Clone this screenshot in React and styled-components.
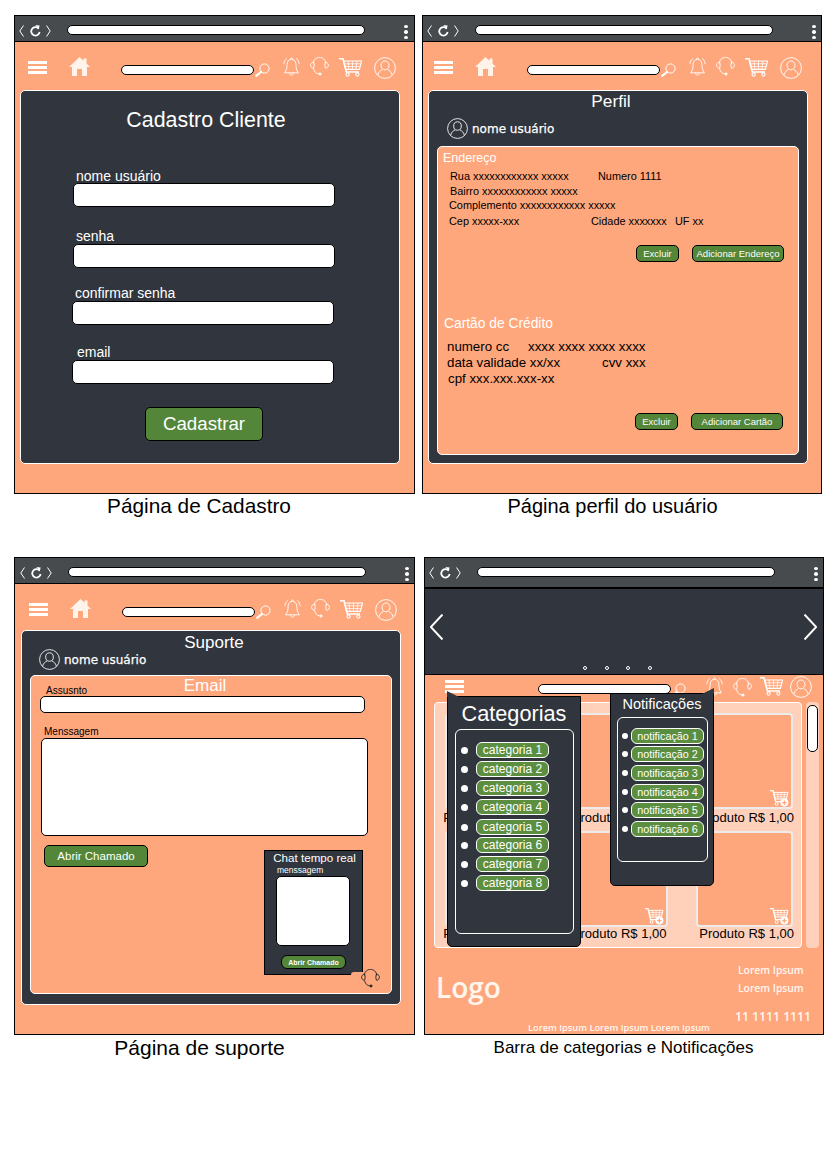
import React from 'react';
import styled, { createGlobalStyle } from 'styled-components';

const ORANGE = '#ffa77c';
const DARK = '#31353d';
const GREEN = '#538639';
const PILL = '#5c8e3f';
const SANS = '"Liberation Sans", Arial, sans-serif';

const Global = createGlobalStyle`
	* { box-sizing: border-box; }
	body {
		margin: 0;
		background: #fff;
		font-family: ${SANS};
		color: #000;
	}
`;

const Page = styled.div`
	padding: 15px 0 0 14px;
	height: 1169px;
	overflow: hidden;
`;
const Row = styled.div`
	display: flex;
	gap: ${(p) => p.$gap}px;
	margin-bottom: ${(p) => p.$bottom || 0}px;
`;
const Cell = styled.div`
	width: 401px;
`;
const Caption = styled.div`
	text-align: center;
	white-space: nowrap;
	font-size: ${(p) => p.$size}px;
	line-height: 24px;
	margin: ${(p) => p.$top}px 0 0 ${(p) => p.$shift || 0}px;
`;
const Frame = styled.div`
	position: relative;
	width: ${(p) => p.$width || 401}px;
	height: ${(p) => p.$height}px;
	border: 1px solid #000;
	background: ${ORANGE};
`;

const Bar = styled.div`
	display: flex;
	height: ${(p) => p.$height}px;
	padding: 9px 0 0 ${(p) => 4 + (p.$shift || 0)}px;
	background: #474b4e;
	border-bottom: ${(p) => p.$line}px solid #000;
`;
const Url = styled.div`
	width: 298px;
	height: 10px;
	margin-left: 16px;
	background: #fff;
	border: 1px solid #000;
	border-radius: 5px;
`;
const Dots = styled.div`
	display: flex;
	flex-direction: column;
	gap: 2px;
	margin-left: 39px;
	height: 14px;
	& > i {
		width: 4px;
		height: 4px;
		border-radius: 50%;
		background: #fff;
	}
`;

const Chevron = ({ dir = 'left', w = 5, h = 12, sw = 1, ml = 0 }) => (
	<svg width={w} height={h} viewBox={`0 0 ${w} ${h}`} style={{ marginLeft: ml, flexShrink: 0 }}>
		<path
			d={dir === 'left' ? `M${w - 0.5} 0.5L0.8 ${h / 2}L${w - 0.5} ${h - 0.5}` : `M0.5 0.5L${w - 0.8} ${h / 2}L0.5 ${h - 0.5}`}
			fill="none"
			stroke="#fff"
			strokeWidth={sw}
		/>
	</svg>
);

const Refresh = () => (
	<svg width="11" height="12" viewBox="0 0 11 12" style={{ marginLeft: 6 }}>
		<path d="M8.6 3.6A4.2 4.2 0 1 0 9.6 7" fill="none" stroke="#fff" strokeWidth="1.8" />
		<path d="M5.4 0L9.6 0.6L8.8 4.6Z" fill="#fff" />
	</svg>
);

const Browser = ({ height = 25, line = 1, shift = 0 }) => (
	<Bar $height={height + line} $line={line} $shift={shift}>
		<Chevron />
		<Refresh />
		<Chevron dir="right" ml={5} />
		<Url />
		<Dots>
			<i />
			<i />
			<i />
		</Dots>
	</Bar>
);

const Nav = styled.div`
	display: flex;
	align-items: flex-start;
	height: ${(p) => p.$height}px;
`;
const Slot = styled.div`
	display: flex;
	flex-shrink: 0;
	margin: ${(p) => p.$top}px 0 0 ${(p) => p.$left}px;
`;
const SearchBox = styled.div`
	width: 133px;
	height: 10px;
	background: #fff;
	border: 1px solid #000;
	border-radius: 5px;
`;

const Burger = () => (
	<svg width="19" height="13" viewBox="0 0 19 13">
		<path d="M0 0h19v3H0zM0 5h19v3H0zM0 10h19v3H0z" fill="#fff" />
	</svg>
);
const Home = () => (
	<svg width="21" height="19" viewBox="0 0 21 19">
		<path d="M10.5 0L14.5 3.8V1.5H17.5V6.6L21 10H18V19H13V12H8V19H3V10H0Z" fill="#fff3ea" />
	</svg>
);
const Magnifier = () => (
	<svg width="15" height="14" viewBox="0 0 15 14">
		<circle cx="9.5" cy="5.5" r="4.6" fill="none" stroke="#fff" strokeWidth="1" />
		<path d="M6 9L1.2 12.8" stroke="#fff" strokeWidth="2.2" strokeLinecap="round" />
	</svg>
);
const Bell = () => (
	<svg width="17" height="19" viewBox="0 0 17 19" fill="none" stroke="#fff" strokeWidth="0.9">
		<path d="M1.6 15.8C3.8 13 4 10.6 4.1 7.4C4.2 4 6 2.4 8.5 2.4S12.8 4 12.9 7.4C13 10.6 13.2 13 15.4 15.8Z" />
		<path d="M6.6 16C6.6 18.8 10.4 18.8 10.4 16M7.5 2.4C7.5 0.2 9.5 0.2 9.5 2.4" />
		<path d="M3.8 1.4C2 2.8 1 4.8 0.8 7.2M13.2 1.4C15 2.8 16 4.8 16.2 7.2" />
	</svg>
);
const Headset = ({ color = '#fff' }) => (
	<svg width="19" height="20" viewBox="0 0 19 20" fill="none" stroke={color} strokeWidth="0.9">
		<path d="M3.4 7.5C3.4 -0.6 15.6 -0.6 15.6 7.5" />
		<path d="M3.4 6C1.4 6.6 0.6 8 0.6 9.2S1.4 12 3.4 12.4C4.4 11 4.4 7.4 3.4 6Z" />
		<path d="M15.6 6C17.6 6.6 18.4 8 18.4 9.2S17.6 12 15.6 12.4C14.6 11 14.6 7.4 15.6 6Z" />
		<path d="M3.6 12.6C4.4 16 6 17.6 8.6 17.8" />
		<circle cx="10" cy="18" r="1.1" fill={color} />
	</svg>
);
const Cart = () => (
	<svg width="23" height="19" viewBox="0 0 23 19" fill="none" stroke="#fff" strokeWidth="1.1">
		<path d="M0 0.8H4L7.4 14H20" strokeWidth="1.6" />
		<path d="M4.6 3H22.6L20.4 11.4H6.6Z" />
		<path d="M5.2 5.8H21.8M6 8.6H21.2M9 3L9.8 11.4M13.5 3V11.4M18 3L17 11.4" strokeWidth="0.8" />
		<circle cx="8.6" cy="16.6" r="1.6" />
		<circle cx="18.4" cy="16.6" r="1.6" />
	</svg>
);
const User = ({ size = 22 }) => (
	<svg width={size} height={size} viewBox="0 0 22 22" fill="none" stroke="#fff" strokeWidth="0.9">
		<circle cx="11" cy="11" r="10.4" />
		<ellipse cx="11" cy="8.4" rx="4" ry="4.4" />
		<path d="M3.8 18.2C4.6 14.6 6.6 13.4 8.4 12.6M18.2 18.2C17.4 14.6 15.4 13.4 13.6 12.6" />
	</svg>
);
const CartPlus = () => (
	<svg width="19" height="17" viewBox="0 0 19 17" fill="none" stroke="#fff" strokeWidth="1">
		<path d="M0 0.6H3L5.6 11.6H12" strokeWidth="1.3" />
		<path d="M3.6 2.4H18L16.4 9H5.2Z" />
		<path d="M4.2 4.6H17.4M4.8 6.8H16.8M7.6 2.4L8.2 9M11 2.4V9M14.6 2.4L13.8 9" strokeWidth="0.7" />
		<circle cx="6.6" cy="14" r="1.4" />
		<circle cx="14.4" cy="12.6" r="4" fill="#fff" stroke="none" />
		<path d="M14.4 10.4V14.8M12.2 12.6H16.6" stroke={ORANGE} strokeWidth="1.2" />
	</svg>
);

const Toolbar = ({ shift = 0, height = 48 }) => (
	<Nav $height={height}>
		<Slot $top={19} $left={13 + shift}><Burger /></Slot>
		<Slot $top={15} $left={22}><Home /></Slot>
		<Slot $top={23} $left={31}><SearchBox /></Slot>
		<Slot $top={21} $left={1}><Magnifier /></Slot>
		<Slot $top={15} $left={13}><Bell /></Slot>
		<Slot $top={14} $left={10}><Headset /></Slot>
		<Slot $top={16} $left={10}><Cart /></Slot>
		<Slot $top={15} $left={12}><User /></Slot>
	</Nav>
);

const Panel = styled.div`
	width: 380px;
	height: ${(p) => p.$height}px;
	margin-left: ${(p) => p.$left}px;
	background: ${DARK};
	border: 1px solid #fff;
	border-radius: 5px;
	overflow: hidden;
`;
const Title = styled.div`
	color: #fff;
	text-align: center;
	font-size: ${(p) => p.$size}px;
	line-height: ${(p) => p.$lh}px;
	margin-top: ${(p) => p.$top}px;
	padding: 0 ${(p) => (p.$shift < 0 ? -2 * p.$shift : 0)}px 0 ${(p) => (p.$shift > 0 ? 2 * p.$shift : 0)}px;
`;
const Field = styled.div`
	margin: ${(p) => p.$top}px 0 0 ${(p) => p.$left}px;
`;
const FieldLabel = styled.div`
	color: #fff;
	font-size: 14px;
	line-height: 14px;
	margin: 0 0 ${(p) => p.$gap}px ${(p) => p.$shift}px;
`;
const Input = styled.div`
	width: 262px;
	height: 24px;
	background: #fff;
	border: 1px solid #000;
	border-radius: 5px;
`;
const SubmitButton = styled.button`
	display: block;
	width: 118px;
	height: 34px;
	margin: 23px 0 0 124px;
	padding: 0;
	background: ${GREEN};
	color: #fff;
	border: 1px solid #000;
	border-radius: 5px;
	font: 18.7px ${SANS};
`;

const UserRow = styled.div`
	display: flex;
	align-items: center;
	gap: 4px;
	height: 21px;
	margin: ${(p) => p.$top}px 0 0 ${(p) => p.$left}px;
	color: #fff;
	font: 12px "DejaVu Sans", sans-serif;
	-webkit-text-stroke: 0.25px #fff;
`;
const Inner = styled.div`
	width: 362px;
	height: ${(p) => p.$height}px;
	margin: ${(p) => p.$top}px 0 0 8px;
	background: ${ORANGE};
	border: 1px solid #fff;
	border-radius: 5px;
`;
const SectionTitle = styled.div`
	color: #fff;
	font-size: ${(p) => p.$size}px;
	line-height: 16px;
	margin: ${(p) => p.$top}px 0 0 ${(p) => p.$left}px;
`;
const Line = styled.div`
	display: flex;
	white-space: pre;
	font-size: ${(p) => p.$size}px;
	line-height: 14px;
	margin: ${(p) => p.$top}px 0 0 ${(p) => p.$left}px;
`;
const Col = styled.span`
	width: ${(p) => p.$w}px;
	flex-shrink: 0;
`;
const Actions = styled.div`
	display: flex;
	gap: 13px;
	margin: ${(p) => p.$top}px 0 0 ${(p) => p.$left}px;
`;
const SmallButton = styled.button`
	width: ${(p) => p.$w}px;
	height: 17px;
	padding: 0;
	background: ${GREEN};
	color: #fff;
	border: 1px solid #000;
	border-radius: 5px;
	font: 9.5px ${SANS};
	white-space: nowrap;
`;

const EmailHead = styled.div`
	display: grid;
	height: 20px;
	& > * {
		grid-area: 1 / 1;
	}
`;
const EmailTitle = styled.div`
	justify-self: center;
	align-self: start;
	margin: 2px 12px 0 0;
	color: #fff;
	font-size: 17px;
	line-height: 16px;
`;
const TinyLabel = styled.div`
	font-size: 10px;
	line-height: 10px;
	margin: ${(p) => p.$top || 0}px 0 0 ${(p) => p.$left}px;
	align-self: end;
`;
const Box = styled.div`
	width: ${(p) => p.$w}px;
	height: ${(p) => p.$h}px;
	margin: ${(p) => p.$top || 0}px 0 0 ${(p) => p.$left}px;
	background: #fff;
	border: 1px solid #000;
	border-radius: ${(p) => p.$r}px;
`;
const SupportRow = styled.div`
	display: flex;
	align-items: flex-start;
	margin-top: 9px;
`;
const OpenTicket = styled.button`
	width: 104px;
	height: 22px;
	margin-left: 13px;
	padding: 0;
	background: ${GREEN};
	color: #fff;
	border: 1px solid #000;
	border-radius: 5px;
	font: 11.5px ${SANS};
`;
const Chat = styled.div`
	position: relative;
	width: 99px;
	height: 125px;
	margin: 5px 0 0 116px;
	background: ${DARK};
	border: 1px solid #000;
	&::after {
		content: '';
		position: absolute;
		right: -1px;
		bottom: -1px;
		width: 12px;
		height: 3px;
		background: ${ORANGE};
		border-radius: 6px 0 0 0;
	}
`;
const ChatTitle = styled.div`
	color: #fff;
	text-align: center;
	font-size: 11.6px;
	line-height: 12px;
	margin: 1px 0 0 2px;
`;
const ChatLabel = styled.div`
	color: #fff;
	font-size: 8.5px;
	line-height: 10px;
	margin: 1px 0 0 12px;
`;
const ChatButton = styled.button`
	display: block;
	width: 65px;
	height: 14px;
	margin: 9px 0 0 16px;
	padding: 0;
	background: ${GREEN};
	color: #fff;
	border: 1px solid #000;
	border-radius: 6px;
	font: bold 7px ${SANS};
`;
const ChatHeadset = styled.div`
	position: absolute;
	left: 96px;
	top: 117px;
	display: flex;
	z-index: 1;
`;

const Hero = styled.div`
	position: relative;
	display: flex;
	align-items: flex-start;
	justify-content: space-between;
	height: 86px;
	padding: 25px 6px 0 5px;
	background: ${DARK};
	border-bottom: 1px solid #000;
`;
const HeroDots = styled.div`
	position: absolute;
	left: 158px;
	top: 77px;
	display: flex;
	gap: 17.6px;
	& > i {
		width: 4px;
		height: 4px;
		border-radius: 50%;
		border: 1px solid #fff;
	}
`;
const Shelf = styled.div`
	display: flex;
	gap: 4px;
	margin-left: 9px;
`;
const Products = styled.div`
	display: grid;
	grid-template-columns: repeat(3, 97px);
	column-gap: 28.5px;
	row-gap: 5px;
	align-content: start;
	width: 368px;
	height: 246px;
	padding: 10px 0 0 10px;
	background: #ffd1bb;
	border: 1px solid #fff;
	border-radius: 4px;
`;
const ProductCard = styled.div`
	display: flex;
	align-items: flex-end;
	justify-content: flex-end;
	height: 96px;
	padding: 0 2px 0 0;
	background: ${ORANGE};
	border: 2px solid #ececec;
	border-radius: 4px;
`;
const Price = styled.div`
	margin: ${(p) => p.$top}px ${(p) => p.$inset}px 0 -10px;
	text-align: right;
	font-size: 13px;
	line-height: 16px;
	white-space: nowrap;
`;
const Scroll = styled.div`
	width: 13px;
	height: 246px;
	padding: 3px 1px;
	background: #ffd1bb;
	border-radius: 4px;
`;
const Thumb = styled.div`
	width: 11px;
	height: 47px;
	background: #fff;
	border: 1px solid #000;
	border-radius: 5px;
`;
const Footer = styled.div`
	display: grid;
	grid-template-columns: 103px 210px 1fr;
	height: 86px;
	font-family: "Open Sans", sans-serif;
	font-weight: 600;
	color: #fff6f0;
`;
const Logo = styled.div`
	font-size: 28px;
	line-height: 32px;
	margin: 23px 0 0 11px;
`;
const FooterLine = styled.div`
	align-self: end;
	font-size: 9.25px;
	line-height: 12px;
	white-space: nowrap;
`;
const FooterSide = styled.div`
	display: flex;
	flex-direction: column;
	font-size: 10.3px;
	line-height: 12px;
	padding-top: 16px;
	white-space: nowrap;
`;
const FooterLorem = styled.span`
	margin-top: ${(p) => p.$top}px;
`;
const Phone = styled.div`
	font-size: 12.2px;
	margin: 17px 0 0 -3px;
`;
const Popover = styled.div`
	position: absolute;
	left: ${(p) => p.$left}px;
	top: ${(p) => p.$top}px;
	width: ${(p) => p.$w}px;
	height: ${(p) => p.$h}px;
	background: ${DARK};
	border: 1px solid #000;
	border-radius: 0 0 5px 5px;
	&::before {
		content: '';
		position: absolute;
		top: -6px;
		${(p) => (p.$tail === 'right' ? 'right: -1px;' : 'left: -1px;')}
		width: 12px;
		height: 6px;
		background: ${DARK};
		clip-path: ${(p) => (p.$tail === 'right' ? 'polygon(100% 0, 100% 100%, 0 100%)' : 'polygon(0 0, 100% 100%, 0 100%)')};
	}
`;
const PopTitle = styled.div`
	color: #fff;
	text-align: center;
	font-size: ${(p) => p.$size}px;
	line-height: 24px;
	margin-top: ${(p) => p.$top}px;
`;
const PopList = styled.div`
	width: ${(p) => p.$w}px;
	height: ${(p) => p.$h}px;
	margin: ${(p) => p.$top}px 0 0 ${(p) => p.$left}px;
	padding: ${(p) => p.$pad}px 0 0 ${(p) => p.$bullet}px;
	border: 1px solid #fff;
	border-radius: 6px;
`;
const PopItem = styled.div`
	display: flex;
	align-items: center;
	gap: ${(p) => p.$gap}px;
	margin-bottom: ${(p) => p.$after}px;
`;
const Bullet = styled.i`
	width: ${(p) => p.$size}px;
	height: ${(p) => p.$size}px;
	border-radius: 50%;
	background: #fff;
	flex-shrink: 0;
`;
const Pill = styled.div`
	width: 73px;
	height: 16px;
	background: ${PILL};
	color: #fff;
	border: 1px solid #fff;
	border-radius: 6px;
	text-align: center;
	font-size: ${(p) => p.$size}px;
	line-height: 14px;
	white-space: nowrap;
`;

const categoryGaps = [3, 3, 3, 4, 2, 3, 3, 0];
const noticeGaps = [2, 3, 3, 2, 3, 0];
const priceInsets = [4, 1, -1];

function CadastroPage() {
	return (
		<Cell>
			<Frame $height={479}>
				<Browser />
				<Toolbar />
				<Panel $left={5} $height={374}>
					<Title $size={21.4} $lh={24} $top={17} $shift={-4}>Cadastro Cliente</Title>
					<Field $top={37} $left={52}>
						<FieldLabel $gap={0} $shift={3}>nome usuário</FieldLabel>
						<Input />
					</Field>
					<Field $top={22} $left={52}>
						<FieldLabel $gap={1} $shift={3}>senha</FieldLabel>
						<Input />
					</Field>
					<Field $top={18} $left={51}>
						<FieldLabel $gap={1} $shift={3}>confirmar senha</FieldLabel>
						<Input />
					</Field>
					<Field $top={20} $left={51}>
						<FieldLabel $gap={1} $shift={5}>email</FieldLabel>
						<Input />
					</Field>
					<SubmitButton>Cadastrar</SubmitButton>
				</Panel>
			</Frame>
			<Caption $size={20.8} $top={0} $shift={-31}>Página de Cadastro</Caption>
		</Cell>
	);
}

function PerfilPage() {
	return (
		<Cell>
			<Frame $height={479} $width={400}>
				<Browser />
				<Toolbar shift={-2} />
				<Panel $left={5} $height={374}>
					<Title $size={17.3} $lh={20} $top={0} $shift={-7}>Perfil</Title>
					<UserRow $top={7} $left={18}>
						<User size={21} />
						nome usuário
					</UserRow>
					<Inner $top={7} $height={309}>
						<SectionTitle $size={12.5} $top={3} $left={5}>Endereço</SectionTitle>
						<Line $size={10.9} $top={3} $left={12}>
							<Col $w={148}>Rua xxxxxxxxxxxx xxxxx</Col>
							<span>Numero 1111</span>
						</Line>
						<Line $size={10.9} $top={1} $left={12}>Bairro xxxxxxxxxxxx xxxxx</Line>
						<Line $size={10.9} $top={0} $left={11}>Complemento xxxxxxxxxxxx xxxxx</Line>
						<Line $size={10.9} $top={2} $left={11}>
							<Col $w={142}>Cep xxxxx-xxx</Col>
							<Col $w={84}>Cidade xxxxxxx</Col>
							<span>UF xx</span>
						</Line>
						<Actions $top={17} $left={198}>
							<SmallButton $w={43}>Excluir</SmallButton>
							<SmallButton $w={92}>Adicionar Endereço</SmallButton>
						</Actions>
						<SectionTitle $size={13.8} $top={54} $left={6}>Cartão de Crédito</SectionTitle>
						<Line $size={13.3} $top={8} $left={9}>
							<Col $w={81}>numero cc</Col>
							<span>xxxx xxxx xxxx xxxx</span>
						</Line>
						<Line $size={13.3} $top={2} $left={9}>
							<Col $w={155}>data validade xx/xx</Col>
							<span>cvv xxx</span>
						</Line>
						<Line $size={13.3} $top={2} $left={10}>cpf xxx.xxx.xxx-xx</Line>
						<Actions $top={27} $left={197}>
							<SmallButton $w={43}>Excluir</SmallButton>
							<SmallButton $w={92}>Adicionar Cartão</SmallButton>
						</Actions>
					</Inner>
				</Panel>
			</Frame>
			<Caption $size={20} $top={0} $shift={-20}>Página perfil do usuário</Caption>
		</Cell>
	);
}

function SuportePage() {
	return (
		<Cell>
			<Frame $height={478}>
				<Browser shift={1} />
				<Toolbar shift={1} height={46} />
				<Panel $left={6} $height={375}>
					<Title $size={17} $lh={14} $top={5} $shift={3}>Suporte</Title>
					<UserRow $top={-1} $left={17}>
						<User size={21} />
						nome usuário
					</UserRow>
					<Inner $top={5} $height={319}>
						<EmailHead>
							<EmailTitle>Email</EmailTitle>
							<TinyLabel $left={15}>Assusnto</TinyLabel>
						</EmailHead>
						<Box $w={325} $h={17} $left={9} $r={5} />
						<TinyLabel $top={14} $left={13}>Menssagem</TinyLabel>
						<Box $w={327} $h={98} $top={1} $left={10} $r={5} />
						<SupportRow>
							<OpenTicket>Abrir Chamado</OpenTicket>
							<Chat>
								<ChatTitle>Chat tempo real</ChatTitle>
								<ChatLabel>menssagem</ChatLabel>
								<Box $w={74} $h={70} $top={1} $left={11} $r={5} />
								<ChatButton>Abrir Chamado</ChatButton>
								<ChatHeadset>
									<Headset color="#222" />
								</ChatHeadset>
							</Chat>
						</SupportRow>
					</Inner>
				</Panel>
			</Frame>
			<Caption $size={21} $top={1} $shift={-30}>Página de suporte</Caption>
		</Cell>
	);
}

function CategoriasPage() {
	const products = [0, 1, 2, 3, 4, 5];
	return (
		<Cell>
			<Frame $height={478} $width={400}>
				<Browser height={29} line={2} />
				<Hero>
					<Chevron w={13} h={26} sw={2} />
					<Chevron dir="right" w={13} h={26} sw={2} />
					<HeroDots>
						<i />
						<i />
						<i />
						<i />
					</HeroDots>
				</Hero>
				<Nav $height={27}>
					<Slot $top={5} $left={20}><Burger /></Slot>
					<Slot $top={9} $left={74}><SearchBox /></Slot>
					<Slot $top={8} $left={0}><Magnifier /></Slot>
					<Slot $top={2} $left={20}><Bell /></Slot>
					<Slot $top={2} $left={10}><Headset /></Slot>
					<Slot $top={2} $left={8}><Cart /></Slot>
					<Slot $top={1} $left={7}><User /></Slot>
				</Nav>
				<Shelf>
					<Products>
						{products.map((n) => (
							<div key={n}>
								<ProductCard>
									<CartPlus />
								</ProductCard>
								<Price $top={n < 3 ? 1 : -1} $inset={priceInsets[n % 3]}>Produto R$ 1,00</Price>
							</div>
						))}
					</Products>
					<Scroll>
						<Thumb />
					</Scroll>
				</Shelf>
				<Footer>
					<Logo>Logo</Logo>
					<FooterLine>Lorem Ipsum Lorem Ipsum Lorem Ipsum</FooterLine>
					<FooterSide>
						<FooterLorem $top={0}>Lorem Ipsum</FooterLorem>
						<FooterLorem $top={6}>Lorem Ipsum</FooterLorem>
						<Phone>11 1111 1111</Phone>
					</FooterSide>
				</Footer>
				<Popover $left={22} $top={138} $w={134} $h={251}>
					<PopTitle $size={21.7} $top={5}>Categorias</PopTitle>
					<PopList $w={119} $h={205} $top={3} $left={7} $pad={12} $bullet={5}>
						{categoryGaps.map((after, i) => (
							<PopItem key={i} $gap={8} $after={after}>
								<Bullet $size={7} />
								<Pill $size={12}>categoria {i + 1}</Pill>
							</PopItem>
						))}
					</PopList>
				</Popover>
				<Popover $left={185} $top={135} $w={104} $h={193} $tail="right">
					<PopTitle $size={14.5} $top={-2}>Notificações</PopTitle>
					<PopList $w={91} $h={145} $top={1} $left={6} $pad={10} $bullet={4}>
						{noticeGaps.map((after, i) => (
							<PopItem key={i} $gap={3} $after={after}>
								<Bullet $size={6} />
								<Pill $size={10.8}>notificação {i + 1}</Pill>
							</PopItem>
						))}
					</PopList>
				</Popover>
			</Frame>
			<Caption $size={17} $top={1} $shift={-2}>Barra de categorias e Notificações</Caption>
		</Cell>
	);
}

export default function App() {
	return (
		<Page>
			<Global />
			<Row $gap={7} $bottom={39}>
				<CadastroPage />
				<PerfilPage />
			</Row>
			<Row $gap={9}>
				<SuportePage />
				<CategoriasPage />
			</Row>
		</Page>
	);
}
